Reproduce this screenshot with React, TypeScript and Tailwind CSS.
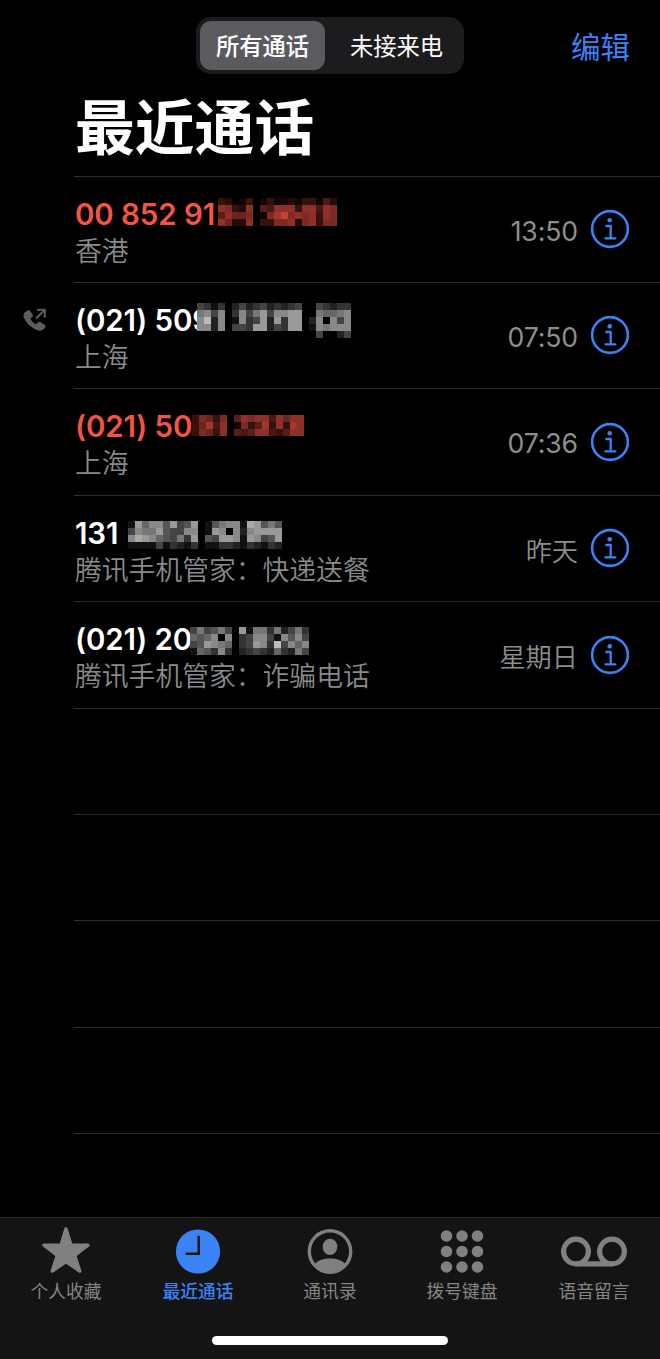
import React from "react";

type Call = {
  number: string;
  place: string;
  time: string;
  cjkTime?: boolean;
  missed?: boolean;
  outgoing?: boolean;
  mosaicClass: string;
  columns: number;
  mosaic: string[];
};

// Each mosaic digit is the brightness of one 7px cell, in hex.
const calls: Call[] = [
  {
    number: "00 852 91",
    place: "香港",
    time: "13:50",
    missed: true,
    mosaicClass: "left-[144px] top-[21px]",
    columns: 17,
    mosaic: ["32013013112133142", "87328054888388487", "586670179b7878387", "86228033778278377"],
  },
  {
    number: "(021) 509",
    place: "上海",
    time: "07:50",
    outgoing: true,
    mosaicClass: "left-[123px] top-[20px]",
    columns: 22,
    mosaic: ["4313024234232340043233", "7848038479488990076678", "8b28018349293990280848", "8828044399243990187888", "0000000000000000040024"],
  },
  {
    number: "(021) 50",
    place: "上海",
    time: "07:36",
    missed: true,
    mosaicClass: "left-[118px] top-[26px]",
    columns: 16,
    mosaic: ["3763705878848688", "3694801735938398", "3763805458843588"],
  },
  {
    number: "131",
    place: "腾讯手机管家：快递送餐",
    time: "昨天",
    cjkTime: true,
    mosaicClass: "left-[54px] top-[25px]",
    columns: 22,
    mosaic: ["19688594590157881a9575", "4877954488019808289999", "8a98654739054998198459", "1111413213011332132132"],
  },
  {
    number: "(021) 20",
    place: "腾讯手机管家：诈骗电话",
    time: "星期日",
    cjkTime: true,
    mosaicClass: "left-[116px] top-[25px]",
    columns: 17,
    mosaic: ["47457409177372473", "65680803488418584", "459876034983b4868", "16538302343263274"],
  },
];

function Mosaic({ call }: { call: Call }) {
  const rgb = call.missed ? "250, 84, 70" : "255, 255, 255";
  const range = call.missed ? 14 : 15;
  return (
    <div
      className={"absolute grid bg-black " + call.mosaicClass}
      style={{ gridTemplateColumns: `repeat(${call.columns}, 7px)`, gridAutoRows: "7px" }}
    >
      {call.mosaic.join("").split("").map((level, i) => (
        <i key={i} style={{ backgroundColor: `rgba(${rgb}, ${parseInt(level, 16) / range})` }} />
      ))}
    </div>
  );
}

function InfoIcon() {
  return (
    <svg className="h-10 w-10 shrink-0" viewBox="0 0 40 40" fill="none" stroke="#3b82f7">
      <circle cx="20" cy="20" r="17.9" strokeWidth="2.6" />
      <circle cx="19.7" cy="11.2" r="2.3" fill="#3b82f7" stroke="none" />
      <path d="M16.3 17h4.4v12.3M15.4 29.3h10" strokeWidth="2.3" strokeLinecap="round" strokeLinejoin="round" />
    </svg>
  );
}

function OutgoingIcon() {
  return (
    <svg className="h-6 w-6" viewBox="0 0 24 24" fill="none">
      <path
        d="M2.6 3.8 4.6 2.4c.9-.6 1.9-.4 2.5.5l2.5 3.6c.6.9.4 1.8-.4 2.5L7.9 10.1c-.4.4-.5.8-.2 1.3 1.2 1.9 2.6 3.3 4.6 4.5.5.3.9.2 1.3-.2l1.2-1.3c.7-.8 1.6-.9 2.5-.3l4.400 2.700c.9.6 1.100 1.600.5 2.500l-1.300 1.600C19 23 16.500 23.200 13.300 21.800 8.300 19.700 3.700 15.300 1.300 10.500-.1 7.600.2 5.500 2.600 3.800Z"
        fill="#5c5c5c"
      />
      <path d="m13 10.5 8.5-8.5M14 1.700h7.800v7.800" stroke="#5c5c5c" strokeWidth="2" />
    </svg>
  );
}

function StarIcon() {
  return (
    <svg className="h-[48px] w-[52px]" viewBox="0 0 52 48">
      <path
        d="M26 3 31 19.2 48 19.2 34.6 29.4 39.7 45 26 35.6 12.3 45 17.4 29.4 4 19.2 21 19.2Z"
        fill="#808080"
        stroke="#808080"
        strokeWidth="3.5"
        strokeLinejoin="round"
      />
    </svg>
  );
}

function ClockIcon() {
  return (
    <svg className="h-[48px] w-[48px]" viewBox="0 0 48 48">
      <circle cx="24" cy="25.5" r="22.1" fill="#3b82f7" />
      <path d="M24.7 9.7v18H11.7" fill="none" stroke="#141414" strokeWidth="2.5" />
    </svg>
  );
}

function ContactIcon() {
  return (
    <svg className="h-[48px] w-[48px]" viewBox="0 0 48 48" fill="#808080">
      <circle cx="24" cy="25.5" r="20.7" fill="none" stroke="#808080" strokeWidth="3.4" />
      <ellipse cx="24" cy="20.9" rx="7.3" ry="8.2" />
      <path d="M8.5 38.5c3-4 9-5.9 15.5-5.9s12.5 1.9 15.5 5.9C36 43.5 30.5 47 24 47S12 43.5 8.5 38.500Z" />
    </svg>
  );
}

function KeypadIcon() {
  return (
    <svg className="h-[48px] w-[48px]" viewBox="0 0 48 48" fill="#808080">
      {[10, 25.5, 41].map((y) => [8.5, 24, 39.5].map((x) => <circle key={`${x}-${y}`} cx={x} cy={y} r="5.8" />))}
    </svg>
  );
}

function VoicemailIcon() {
  return (
    <svg className="h-[48px] w-[70px]" viewBox="0 0 70 48" fill="none" stroke="#808080" strokeWidth="5.2">
      <circle cx="17" cy="25.5" r="12.4" />
      <circle cx="53" cy="25.5" r="12.4" />
      <path d="M17 37.9h36" />
    </svg>
  );
}

const tabs = [
  { label: "个人收藏", icon: <StarIcon /> },
  { label: "最近通话", icon: <ClockIcon />, active: true },
  { label: "通讯录", icon: <ContactIcon /> },
  { label: "拨号键盘", icon: <KeypadIcon /> },
  { label: "语音留言", icon: <VoicemailIcon /> },
];

function CallRow({ call }: { call: Call }) {
  return (
    <li className="flex h-[106.4px]">
      <div className="w-[74px] shrink-0 pl-[23px] pt-[26px]">{call.outgoing && <OutgoingIcon />}</div>
      <div className="relative flex flex-1 justify-between border-t border-[#2d2d2f] pr-[30px]">
        <div className="pt-[18px]">
          <div
            className={
              "h-[37px] whitespace-nowrap pl-px text-[29.5px] leading-[38px] font-semibold tracking-[-0.1px] " +
              (call.missed ? "text-[#f25544]" : "text-white")
            }
          >
            {call.number}
          </div>
          <div className="h-9 whitespace-nowrap pl-px text-[26.8px] leading-[38px] font-[350] text-[#8a8a8a]">{call.place}</div>
        </div>
        <Mosaic call={call} />
        <div className="flex h-[105px] items-center gap-[12px]">
          <span
            className={
              "text-[#8e8e8e] " +
              (call.cjkTime ? "pt-[6px] text-[26.2px] font-[350]" : "pt-[5px] text-[26.6px] tracking-[-0.1px]")
            }
          >
            {call.time}
          </span>
          <InfoIcon />
        </div>
      </div>
    </li>
  );
}

export default function App() {
  return (
    <div className="flex h-[1359px] w-[660px] flex-col overflow-hidden bg-black font-['Inter','Noto_Sans_CJK_SC',sans-serif]">
      <header className="h-[175.6px] shrink-0">
        <div className="grid grid-cols-[1fr_268px_1fr] items-center pt-[17px]">
          <span />
          <div className="flex h-[57px] rounded-[15px] bg-[#1c1c1e] p-[4px] text-[23.3px] text-white">
            <div className="flex w-[125px] items-center justify-center rounded-[11px] bg-[#5b5a5f] pt-[3px] font-medium">所有通话</div>
            <div className="flex flex-1 items-center justify-center pl-[8px] pt-[3px]">未接来电</div>
          </div>
          <div className="pr-[30px] pt-[3px] text-right text-[29.5px] text-[#3b82f7]">编辑</div>
        </div>
        <h1 className="pl-[75px] pt-[2px] text-[59.8px] leading-[104px] font-bold text-white">最近通话</h1>
      </header>
      <main className="h-[1041.4px] shrink-0 overflow-hidden">
        <ul>
          {calls.map((call) => (
            <CallRow key={call.number} call={call} />
          ))}
          {[0, 1, 2, 3, 4].map((n) => (
            <li key={n} className="h-[106.4px] pl-[74px]">
              <div className="border-t border-[#2d2d2f]" />
            </li>
          ))}
        </ul>
      </main>
      <footer className="flex h-[142px] shrink-0 flex-col items-center justify-between border-t border-[#29292a] bg-[#141414] pb-[14px]">
        <nav className="grid w-full grid-cols-5 pt-[8px]">
          {tabs.map((tab) => (
            <div
              key={tab.label}
              className={
                "flex flex-col items-center text-[17.8px] leading-[30px] " +
                (tab.active ? "font-medium text-[#3b82f7]" : "text-[#858585]")
              }
            >
              {tab.icon}
              <span className="pt-[3px]">{tab.label}</span>
            </div>
          ))}
        </nav>
        <div className="h-[9px] w-[236px] rounded-full bg-white" />
      </footer>
    </div>
  );
}
